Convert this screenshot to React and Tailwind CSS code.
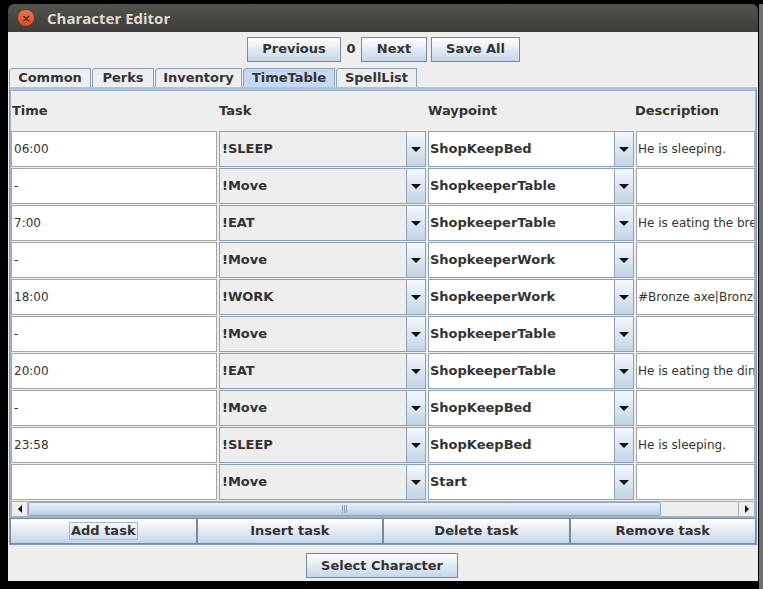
import React from "react";

const rows = [
  { time: "06:00", task: "!SLEEP", wp: "ShopKeepBed", desc: "He is sleeping." },
  { time: "-", task: "!Move", wp: "ShopkeeperTable", desc: "" },
  { time: "7:00", task: "!EAT", wp: "ShopkeeperTable", desc: "He is eating the breakfast" },
  { time: "-", task: "!Move", wp: "ShopkeeperWork", desc: "" },
  { time: "18:00", task: "!WORK", wp: "ShopkeeperWork", desc: "#Bronze axe|Bronze sword" },
  { time: "-", task: "!Move", wp: "ShopkeeperTable", desc: "" },
  { time: "20:00", task: "!EAT", wp: "ShopkeeperTable", desc: "He is eating the dinner" },
  { time: "-", task: "!Move", wp: "ShopKeepBed", desc: "" },
  { time: "23:58", task: "!SLEEP", wp: "ShopKeepBed", desc: "He is sleeping." },
  { time: "", task: "!Move", wp: "Start", desc: "" },
];

const tabs = ["Common", "Perks", "Inventory", "TimeTable", "SpellList"];
const tabW = ["w-[82px]", "w-[62px]", "w-[87px]", "w-[92px]", "w-[81px]"];

function Btn({ children, className = "" }) {
  return (
    <button
      className={
        "flex items-center justify-center border border-[#7a8a99] bg-gradient-to-b from-white to-[#c6d6e8] text-[13px] font-bold text-[#333] " +
        className
      }
    >
      {children}
    </button>
  );
}

function Arrow() {
  return (
    <div className="flex w-[19px] shrink-0 items-center justify-center border-l border-[#8ea3ba] bg-gradient-to-b from-[#f4f8fc] to-[#c3d4e6]">
      <svg width="10" height="5" viewBox="0 0 10 5">
        <path d="M0 0H10L5 5Z" fill="#111" />
      </svg>
    </div>
  );
}

export default function App() {
  return (
    <div
      className="flex h-[589px] w-[763px] overflow-hidden bg-black pt-[4px] pl-[8px]"
      style={{ fontFamily: '"DejaVu Sans", sans-serif' }}
    >
      <div className="flex h-[577px] w-[750px] flex-col overflow-hidden rounded-t-[6px]">
        {/* title bar */}
        <div className="flex h-[28px] items-center gap-[13px] bg-gradient-to-b from-[#55544f] to-[#3c3b37] pl-[10px]">
          <div className="flex h-[16px] w-[16px] items-center justify-center rounded-full bg-gradient-to-b from-[#f0734a] to-[#d9481e] text-[11px] leading-none text-[#3a1a10]">
            ×
          </div>
          <span
            className="text-[15px] font-bold text-[#dfdbd2]"
            style={{ fontFamily: '"Open Sans", "DejaVu Sans", sans-serif' }}
          >
            Character Editor
          </span>
        </div>

        {/* body */}
        <div className="flex flex-1 flex-col bg-[#eeeeee] px-[1px]">
          <div className="flex h-[33px] items-center pt-[1px] pl-[238px]">
            <Btn className="h-[25px] w-[94px]">Previous</Btn>
            <span className="w-[20px] text-center text-[13px] font-bold text-[#333]">0</span>
            <Btn className="h-[25px] w-[66px]">Next</Btn>
            <Btn className="ml-[4px] h-[25px] w-[89px]">Save All</Btn>
          </div>

          {/* tabs */}
          <div className="flex h-[22px] items-end">
            {tabs.map((t, i) => (
              <div
                key={t}
                className={
                  "flex h-[19px] items-center justify-center rounded-tl-[4px] border border-b-0 border-[#8ea3ba] text-[13px] font-bold text-[#333] " +
                  tabW[i] +
                  (t === "TimeTable" ? " mr-[1px] bg-[#c5daf0]" : " mr-[1px] bg-[#eeeeee]")
                }
              >
                {t}
              </div>
            ))}
          </div>

          {/* panel */}
          <div className="flex w-[748px] flex-col border-t-[3px] border-r border-b border-l border-[#7b9ac4] border-t-[#a9c3e2]">
            <div className="flex flex-col border border-[#9eb1c6] bg-[#eeeeee]">
              {/* header */}
              <div className="flex h-[40px] items-center text-[13px] font-bold text-[#333]">
                <div className="w-[208px] pl-[1px]">Time</div>
                <div className="w-[209px]">Task</div>
                <div className="w-[207px]">Waypoint</div>
                <div className="flex-1">Description</div>
              </div>

              {/* rows */}
              <div className="flex flex-col gap-px">
                {rows.map((r, i) => (
                  <div key={i} className="flex h-[36px] gap-[2px]">
                    <div className="flex w-[206px] items-center border border-[#a5a5a5] bg-white pl-[2px] text-[12px] text-[#333]">
                      {r.time}
                    </div>
                    <div className="flex w-[207px] border border-[#8ea3ba] bg-[#eeeeee]">
                      <div className="flex flex-1 items-center pl-[2px] text-[13px] font-bold text-[#333]">{r.task}</div>
                      <Arrow />
                    </div>
                    <div className="flex w-[206px] border border-[#8ea3ba] bg-white">
                      <div className="flex flex-1 items-center pl-[1px] text-[13px] font-bold text-[#333]">{r.wp}</div>
                      <Arrow />
                    </div>
                    <div className="flex min-w-0 flex-1 items-center overflow-hidden whitespace-nowrap border border-[#a5a5a5] bg-white pl-[1px] text-[12px] text-[#333]">
                      {r.desc}
                    </div>
                  </div>
                ))}
              </div>

              {/* scrollbar */}
              <div className="mt-[1px] flex h-[16px] border border-[#9eb1c6] bg-[#eeeeee]">
                <div className="flex w-[16px] items-center justify-center border-r border-[#9eb1c6]">
                  <svg width="4" height="8" viewBox="0 0 4 8">
                    <path d="M4 0V8L0 4Z" fill="#111" />
                  </svg>
                </div>
                <div className="flex w-[633px] items-center justify-center rounded-[2px] border border-[#8ea3ba] bg-gradient-to-b from-[#eaf1f9] to-[#b9cde4]">
                  <svg width="6" height="8" viewBox="0 0 6 8">
                    <path d="M0.5 0V8M2.5 0V8M4.5 0V8" stroke="#8aa0b8" strokeWidth="1" />
                  </svg>
                </div>
                <div className="flex-1" />
                <div className="flex w-[16px] items-center justify-center border-l border-[#9eb1c6]">
                  <svg width="4" height="8" viewBox="0 0 4 8">
                    <path d="M0 0V8L4 4Z" fill="#111" />
                  </svg>
                </div>
              </div>
            </div>

            {/* task buttons */}
            <div className="grid grid-cols-4">
              <Btn className="h-[26px]">
                <span className="border border-[#a8b8cc] px-px leading-[16px]">Add task</span>
              </Btn>
              <Btn className="h-[26px]">Insert task</Btn>
              <Btn className="h-[26px]">Delete task</Btn>
              <Btn className="h-[26px]">Remove task</Btn>
            </div>
          </div>

          <div className="flex justify-center pt-[8px] pr-[2px]">
            <Btn className="h-[25px] w-[152px] font-bold">Select Character</Btn>
          </div>
        </div>
      </div>
      <div className="ml-px h-full flex-1 bg-[#6f6f6f]" />
    </div>
  );
}
